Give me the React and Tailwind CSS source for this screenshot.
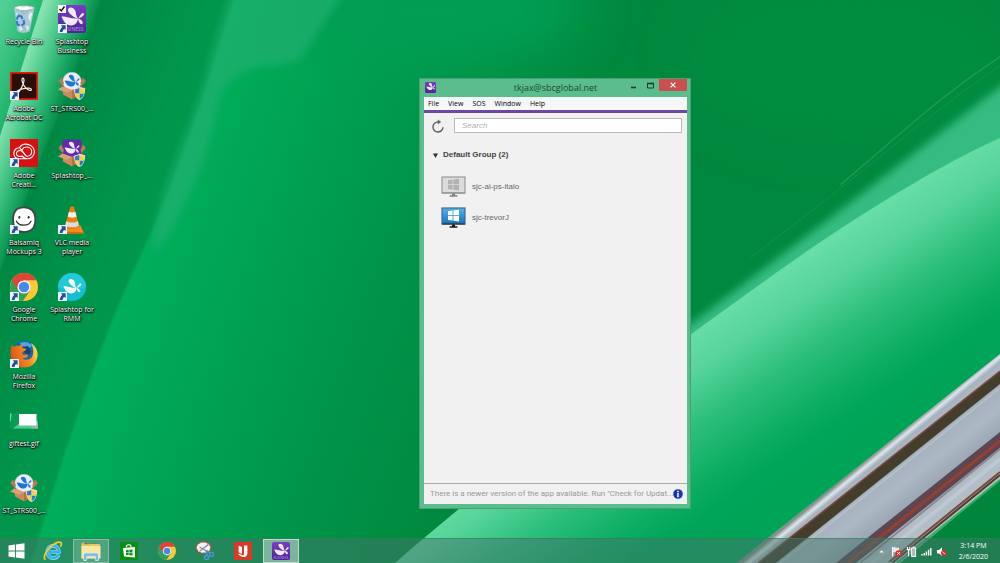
import React, { useState } from 'react';

const segoe = "font-['Open_Sans','Noto_Sans',sans-serif]";
const arial = "font-['Liberation_Sans',Arial,sans-serif]";

function Wallpaper() {
    return (
        <svg className="absolute inset-0 w-full h-full" viewBox="0 0 1000 563" preserveAspectRatio="none" aria-hidden="true">
            <defs>
                <linearGradient id="base" gradientUnits="userSpaceOnUse" x1="120" y1="300" x2="480" y2="430">
                    <stop offset="0" stopColor="#00af5b" />
                    <stop offset="0.2" stopColor="#00a654" />
                    <stop offset="0.6" stopColor="#009549" />
                    <stop offset="1" stopColor="#00883e" />
                </linearGradient>
                <linearGradient id="leftShade" gradientUnits="userSpaceOnUse" x1="40" y1="160" x2="200" y2="220">
                    <stop offset="0" stopColor="#008743" />
                    <stop offset="0.5" stopColor="#00954b" />
                    <stop offset="1" stopColor="#009a4e" />
                </linearGradient>
                <linearGradient id="roll" gradientUnits="userSpaceOnUse" x1="22" y1="68" x2="72" y2="86">
                    <stop offset="0" stopColor="#86e3b2" />
                    <stop offset="0.3" stopColor="#55cd90" />
                    <stop offset="0.65" stopColor="#22ae6b" />
                    <stop offset="1" stopColor="#008743" />
                </linearGradient>
                <linearGradient id="corner" gradientUnits="userSpaceOnUse" x1="0" y1="20" x2="38" y2="34">
                    <stop offset="0" stopColor="#4fcf92" />
                    <stop offset="1" stopColor="#1fb26b" />
                </linearGradient>
                <linearGradient id="sheen" gradientUnits="userSpaceOnUse" x1="752" y1="292" x2="842" y2="428">
                    <stop offset="0" stopColor="#66dea6" />
                    <stop offset="0.22" stopColor="#56d49a" />
                    <stop offset="0.5" stopColor="#2cbe7b" />
                    <stop offset="0.8" stopColor="#0cad63" />
                    <stop offset="1" stopColor="#00a65a" />
                </linearGradient>
                <linearGradient id="chrome" gradientUnits="userSpaceOnUse" x1="884" y1="446" x2="893" y2="457">
                    <stop offset="0" stopColor="#7f9088" />
                    <stop offset="0.3" stopColor="#dfe6ed" />
                    <stop offset="0.6" stopColor="#a5b1bc" />
                    <stop offset="1" stopColor="#aeb9c4" />
                </linearGradient>
                <linearGradient id="steel" gradientUnits="userSpaceOnUse" x1="895" y1="465" x2="930" y2="510">
                    <stop offset="0" stopColor="#a3b0bb" />
                    <stop offset="0.35" stopColor="#acb8c3" />
                    <stop offset="0.7" stopColor="#9ba7b3" />
                    <stop offset="1" stopColor="#b3bdc6" />
                </linearGradient>
                <filter id="soft" x="-20%" y="-20%" width="140%" height="140%"><feGaussianBlur stdDeviation="9" /></filter>
                <filter id="softer" x="-30%" y="-30%" width="160%" height="160%"><feGaussianBlur stdDeviation="24" /></filter>
                <filter id="edge"><feGaussianBlur stdDeviation="1.2" /></filter>
                <filter id="haze" x="-20%" y="-20%" width="140%" height="140%"><feGaussianBlur stdDeviation="4.5" /></filter>
            </defs>
            <rect width="1000" height="563" fill="url(#base)" />
            <ellipse cx="850" cy="60" rx="160" ry="80" fill="#008d40" filter="url(#softer)" />
            <ellipse cx="430" cy="10" rx="150" ry="50" fill="#009f53" filter="url(#softer)" />
            {/* darker side of the long ridge */}
            <path d="M-20 -20H240C215 60 180 170 150 235C115 310 100 350 83 400C62 460 50 500 26 580H-20Z" fill="url(#leftShade)" filter="url(#edge)" />
            <path d="M232 -10H345L300 60C268 70 240 60 220 95C212 150 185 215 154 256C150 200 195 130 210 60Z" fill="#24b072" opacity="0.7" filter="url(#haze)" />
            {/* top left roll */}
            <path d="M43 -6H106C85 60 60 110 38 165C22 205 12 245 -6 285V135Z" fill="url(#roll)" filter="url(#edge)" />
            <path d="M0 0H43L0 136Z" fill="url(#corner)" />
            {/* right hand bands */}
            <path d="M1020 72C930 140 850 205 680 332V350L1020 150Z" fill="#35bc82" filter="url(#haze)" />
            <path d="M1010 50C940 95 900 135 840 185" stroke="#2c9c58" strokeWidth="1.5" fill="none" opacity="0.8" />
            <path d="M1000 66C930 112 870 168 750 258" stroke="#25924f" strokeWidth="1" fill="none" opacity="0.6" />
            <path d="M1000 138C940 165 870 208 800 256C720 312 640 372 560 430C500 474 440 524 395 563H1000Z" fill="url(#sheen)" />
            <path d="M1000 300L860 400L740 480L640 563H1000Z" fill="#00a357" opacity="0.5" filter="url(#soft)" />
            {/* metal trim */}
            <path d="M1000 480L895 563H1000Z" fill="#00863c" />
            <path d="M1000 354L768 538L737 563H900L1000 480Z" fill="url(#steel)" />
            <path d="M1000 354L768 538L737 563H760L1000 372Z" fill="url(#chrome)" />
            <path d="M1000 371L758 563H776L1000 384Z" fill="#443d2c" />
            <path d="M1000 371L758 563" stroke="#7b4941" strokeWidth="1.5" />
            <path d="M1000 388L777 566" stroke="#bac5ce" strokeWidth="2" opacity="0.7" />
            <path d="M1000 432L836 563H856L1000 448Z" fill="#5d4552" />
            <path d="M1000 441L848 563" stroke="#94402e" strokeWidth="3" />
            <path d="M1000 449L860 563" stroke="#8a8a93" strokeWidth="2" />
            <path d="M1000 459L872 563" stroke="#bcc8d2" strokeWidth="4" />
            <path d="M1000 472L889 562" stroke="#7d4636" strokeWidth="2" />
            <path d="M1000 475L892 563" stroke="#4a3c2c" strokeWidth="2" />
            <path d="M1000 480L897 563" stroke="#2cb263" strokeWidth="2" />
        </svg>
    );
}

/* Splashtop drops, drawn on a 28 unit square */
function Splash({ fill = "#fff" }) {
    return (
        <g fill={fill}>
            <path d="M10.4 3.4C12.6 1.6 16.4 3 17.4 6C18.2 8.6 17.8 10.6 20 13.6C17.6 13.4 14.4 11.4 12 8.8C10.4 7 9.2 4.6 10.4 3.4Z" />
            <path d="M3.4 11.6C7.4 11 11.6 13.6 20 13.6C19.8 16 18.8 18.2 16.6 19.6C13.6 21.4 9.4 20.4 7 17.8C5 15.6 4.6 13.4 3.4 11.6Z" />
            <path d="M25.4 8C27 9.4 25 12 20 13.6C22 11.6 23.2 7.2 25.4 8Z" />
            <path d="M20 13.6C23 14.4 25.6 16.6 24.4 18.8C22 20.2 20.6 17 20 13.6Z" />
        </g>
    );
}

function SplashtopIcon({ className, label = true }) {
    return (
        <svg className={className} viewBox="0 0 28 28" aria-hidden="true">
            <defs>
                <linearGradient id="purple" x1="0" y1="0" x2="0" y2="1">
                    <stop offset="0" stopColor="#7d3bc6" />
                    <stop offset="1" stopColor="#4c2596" />
                </linearGradient>
            </defs>
            <rect width="28" height="28" rx="3" fill="url(#purple)" />
            <Splash fill="#f0eaf8" />
            {label && <text x="14" y="26" textAnchor="middle" fontSize="5" fontFamily="Open Sans" fill="#b79fdc">BUSINESS</text>}
        </svg>
    );
}

function BinIcon() {
    return (
        <svg className="w-7 h-7" viewBox="0 0 28 28" aria-hidden="true">
            <path d="M4 3L7.5 26C10 28.4 17 28.4 19.8 26L24.4 3Z" fill="#b4cbd9" opacity="0.92" />
            <path d="M4 3C4 0 24.4 0 24.4 3C23 6 6 6 4 3Z" fill="#e8eff3" stroke="#8fa6b4" strokeWidth="0.8" />
            <path d="M7 2.5L10 1L13 4L17 1L20 3.5L17 5H10Z" fill="#fbfdfd" />
            <path d="M6 7L9 10L8 16ZM20 7L22.5 8L20 17L18 12ZM9 20L13 24L10 26ZM16 20L19 22L17 26Z" fill="#e3edf2" />
            <path d="M11 6L14 9L17 6M12 22L16 25" stroke="#8ea5b4" strokeWidth="0.8" fill="none" />
            <path d="M6.6 14.5L8.6 10.5L11.6 11.5L12.4 14M13.6 15L14.2 18.6L11.6 20.6M9.8 20.5L7.4 19.5L6.8 16" stroke="#3276cf" strokeWidth="2" fill="none" />
        </svg>
    );
}

function AcrobatIcon() {
    return (
        <svg className="w-7 h-7" viewBox="0 0 28 28" aria-hidden="true">
            <rect x="0.8" y="0.8" width="26.4" height="26.4" fill="#2b0f0a" stroke="#ef1c0d" strokeWidth="1.8" />
            <path d="M12.8 6.2C14.8 6.4 14 10.5 12.4 13.8C10.8 17.4 8.4 21.4 6.8 21.2C5 20 9 17.3 13.4 16.6C17.8 15.8 21.4 16 21.5 17.7C21 19.7 16.8 17.5 14.5 14.3C12.4 11.4 11 6.6 12.8 6.2Z" fill="none" stroke="#f5ebe8" strokeWidth="1.2" />
        </svg>
    );
}

function CreativeCloudIcon() {
    return (
        <svg className="w-7 h-7" viewBox="0 0 28 28" aria-hidden="true">
            <rect width="28" height="28" fill="#d90f12" />
            <g fill="none" stroke="#fff" strokeWidth="1.1">
                <path d="M16.5 19.8H9.5C5.6 19.8 3.6 17 3.8 14C4 11 6.4 8.7 9.3 8.8C11.2 5.8 14.5 4.6 17.8 5.4C22 6.3 24.7 9.7 24.3 13.8C23.8 17.5 20.7 20 17 19.8C14.8 19.7 13.6 18.7 12 17" />
                <path d="M15.7 16.6C14.4 15.3 13.4 12.5 11 11.7C8.8 11 6.6 12.5 6.5 14.5C6.4 16.3 7.8 17.4 9.6 17.4H12.6" />
                <path d="M12 10.7C13.2 8.7 15.2 7.7 17.5 8C20.2 8.5 21.9 10.9 21.6 13.4C21.2 16 19 17.5 16.8 17.2C14.6 16.7 13.5 12 9.8 9.2" />
            </g>
        </svg>
    );
}

function BalsamiqIcon() {
    return (
        <svg className="w-7 h-7" viewBox="0 0 28 28" aria-hidden="true">
            <path d="M7 3C11 0.6 18 0.6 22 4C26 8 26.4 16 23.6 21.4C20 26.6 12 27 7 24.4C2.4 20.5 1.2 8 7 3Z" fill="#fff" stroke="#444" strokeWidth="1.8" />
            <ellipse cx="9.3" cy="11.3" rx="1" ry="1.4" fill="#333" />
            <ellipse cx="18.6" cy="11.3" rx="1" ry="1.4" fill="#333" />
            <path d="M6.4 15.3C9.5 20.5 18.5 20.5 21 15.3" fill="none" stroke="#333" strokeWidth="1.3" strokeLinecap="round" />
        </svg>
    );
}

function ChromeIcon({ className }) {
    return (
        <svg className={className} viewBox="0 0 28 28" aria-hidden="true">
            <circle cx="14" cy="14" r="14" fill="#fcc934" />
            <path d="M14 14L1.9 7A14 14 0 0 0 13 28L20 17.5Z" fill="#33a058" />
            <path d="M1.9 7A14 14 0 0 1 26.2 7.2H14L8 17.4Z" fill="#de4437" />
            <circle cx="14" cy="14" r="6.6" fill="#f5f5f5" />
            <circle cx="14" cy="14" r="5.2" fill="#4688f1" />
        </svg>
    );
}

function FirefoxIcon() {
    return (
        <svg className="w-7 h-7" viewBox="0 0 28 28" aria-hidden="true">
            <defs>
                <linearGradient id="fox" x1="0" y1="0.6" x2="1" y2="0.3">
                    <stop offset="0" stopColor="#e2501a" />
                    <stop offset="0.6" stopColor="#f08b1e" />
                    <stop offset="1" stopColor="#fde24a" />
                </linearGradient>
            </defs>
            <circle cx="14.5" cy="13" r="12.4" fill="#1b67ac" />
            <path d="M10 3C14 1 20 2 22 6L18 9L13 7Z" fill="#4aa8dc" />
            <path d="M12 7L18 6L21 11L19 16L14 12Z" fill="#12437f" />
            <path d="M2 4.5C2.5 6 3 6.6 4 6.7C6 5.4 8 5.5 9.5 6C10.6 4.4 11.6 3.8 12.8 3.6C11.8 5.5 12 6.8 12.8 8C14 8.6 15.5 8.3 16.3 9C16 11 13.6 11 12.4 12.5C12.2 14 12.6 14.6 13.8 14.8C15.6 14.9 17 13.8 18.4 14.8C17.4 18 14.6 18.6 12 18C14 20.5 19.5 20.5 22 17C24 13.6 23.6 8 20.8 3C25 5.4 27.8 10 27.6 15.5C27 22.7 21.4 27.6 14 27.6C6.5 27.6 0.7 22 0.6 14.5C0.6 10.5 1 7.2 2 4.5Z" fill="url(#fox)" />
        </svg>
    );
}

function VlcIcon() {
    return (
        <svg className="w-7 h-7" viewBox="0 0 28 28" aria-hidden="true">
            <path d="M3.2 19.5H22.5L26 27.6H2Z" fill="#f58a1c" />
            <path d="M2 26H26V27.6H2Z" fill="#d96a05" />
            <path d="M12.3 1C13 0 15.2 0 16 1L21.4 21C18.5 24 9.6 24 6.6 21Z" fill="#f07c12" />
            <path d="M11 5.8C12.5 6.8 15.8 6.8 17.3 5.8L18.6 10.5C16.5 12 11.8 12 9.7 10.5Z" fill="#f1f1f1" />
            <path d="M8.4 15C11 17 17.3 17 19.8 15L21 19.4C18.3 22 9.8 22 7.2 19.4Z" fill="#dcdcdc" />
        </svg>
    );
}

function RmmIcon() {
    return (
        <svg className="w-7 h-7" viewBox="0 0 28 28" aria-hidden="true">
            <circle cx="14" cy="14" r="14" fill="#15bdd6" />
            <path d="M0 14A14 14 0 0 1 28 14C20 18 8 18 0 14Z" fill="#2bd3df" opacity="0.55" />
            <g transform="translate(2.6 4) scale(0.8)"><Splash /></g>
        </svg>
    );
}

/* Cardboard installer box with the UAC shield */
function BoxIcon({ purple }) {
    return (
        <svg className="w-7 h-7" viewBox="0 0 28 28" aria-hidden="true">
            <path d="M3 6L9 10H19L25 6L23 23L14 27L5 22Z" fill="#8a5431" />
            {purple
                ? <rect x="4.5" y="0.5" width="19" height="17" rx="3" fill="#6429b0" />
                : <circle cx="14" cy="9.5" r="9.3" fill="#e9edf2" stroke="#c3ccd4" strokeWidth="0.6" />}
            <g transform="translate(4.4 1) scale(0.66)"><Splash fill={purple ? "#f0eaf8" : "#1876dd"} /></g>
            <path d="M4.5 14.6L14 18V27.4L5 22.5Z" fill="#c98a5d" />
            <path d="M14 18L23.5 14.6L23 22.5L14 27.4Z" fill="#b1734a" />
            <path d="M4.5 14.6L0 17.4L9 20.8L14 18Z" fill="#dba176" />
            <path d="M23.5 14.6L28 16.8L20 20.6L14 18Z" fill="#c98a5d" />
            <path d="M3 5.5L0.4 9L4.6 14L6 11ZM25 5.5L28 9L23.6 14L22.4 11Z" fill="#b97b50" />
            <path d="M21.5 14.5C23.5 16 25.5 16.4 27 16.5C27.2 22 25.5 26 21.5 28C17.5 26 16 22 16.2 16.5C18 16.4 20 16 21.5 14.5Z" fill="#e8eaec" />
            <path d="M21.5 15.8V21.4H17.2C17 20 17 18.5 17.1 17.3C18.8 17.2 20.3 16.7 21.5 15.8ZM21.5 21.4H26C25.4 24 24 25.9 21.5 27.1Z" fill="#2a7bc8" />
            <path d="M21.5 15.8C22.9 16.8 24.4 17.2 26.1 17.3C26.2 18.6 26.2 20 26 21.4H21.5ZM17.2 21.4H21.5V27.1C19 25.9 17.7 24 17.2 21.4Z" fill="#f8cf3c" />
        </svg>
    );
}

function GifIcon() {
    return (
        <svg className="w-7 h-7" viewBox="0 0 28 28" aria-hidden="true">
            <rect y="6.5" width="28" height="15" fill="#089c52" />
            <path d="M0 6.5H1.5L0.8 14H0Z" fill="#6fd8a0" />
            <path d="M3 21.5L12 14H28V21.5Z" fill="#51cb92" />
            <path d="M20 21.5L28 16V21.5Z" fill="#9fb2ab" />
            <rect x="9" y="7" width="17.5" height="11.5" fill="#fff" />
        </svg>
    );
}

function ShortcutArrow() {
    return (
        <svg className="absolute left-0 bottom-0 w-[9px] h-[9px]" viewBox="0 0 8 8" aria-hidden="true">
            <rect width="8" height="8" fill="#eef3f8" />
            <path d="M2.6 1.2H6.8V5.4L5.6 4.4C4.6 5 4.2 5.8 4 7.2H1.6C1.6 5 2.4 3.8 3.8 2.6Z" fill="#1f4f99" />
        </svg>
    );
}

const columns = [
    [
        { name: "Recycle Bin", icon: <BinIcon /> },
        { name: "Adobe Acrobat DC", icon: <AcrobatIcon />, shortcut: true },
        { name: "Adobe Creati...", icon: <CreativeCloudIcon />, shortcut: true },
        { name: "Balsamiq Mockups 3", icon: <BalsamiqIcon />, shortcut: true },
        { name: "Google Chrome", icon: <ChromeIcon className="w-7 h-7" />, shortcut: true },
        { name: "Mozilla Firefox", icon: <FirefoxIcon />, shortcut: true },
        { name: "giftest.gif", icon: <GifIcon /> },
        { name: "ST_STRS00_...", icon: <BoxIcon /> },
    ],
    [
        { name: "Splashtop Business", icon: <SplashtopIcon className="w-7 h-7" />, shortcut: true, checked: true },
        { name: "ST_STRS00_...", icon: <BoxIcon /> },
        { name: "Splashtop_...", icon: <BoxIcon purple /> },
        { name: "VLC media player", icon: <VlcIcon />, shortcut: true },
        { name: "Splashtop for RMM", icon: <RmmIcon />, shortcut: true },
    ],
];

function DesktopIcon({ item }) {
    return (
        <button className="flex flex-col items-center gap-1 h-[67px] w-full px-px">
            <span className="relative block">
                {item.icon}
                {item.shortcut && <ShortcutArrow />}
                {item.checked && (
                    <svg className="absolute left-0 top-0 w-2 h-2" viewBox="0 0 8 8" aria-hidden="true">
                        <rect width="8" height="8" fill="#fff" />
                        <path d="M1.5 4L3.3 6L6.5 1.5" fill="none" stroke="#111" strokeWidth="1.4" />
                    </svg>
                )}
            </span>
            <span className="text-[7px] leading-[9px] text-white text-center [text-shadow:0_1px_1px_#000,1px_1px_2px_#000,0_0_2px_#000]">{item.name}</span>
        </button>
    );
}

function Monitor({ online }) {
    return (
        <svg className="w-[25px] h-[21px] shrink-0" viewBox="0 0 25 21" aria-hidden="true">
            <defs>
                <linearGradient id="screen" x1="0" y1="0" x2="0" y2="1">
                    <stop offset="0" stopColor="#4fb4ee" />
                    <stop offset="1" stopColor="#1373c4" />
                </linearGradient>
            </defs>
            <rect x="1" y="1" width="23" height="16" fill={online ? "url(#screen)" : "#dcdcdc"} stroke={online ? "#4b6a80" : "#9a9a9a"} strokeWidth="1.2" />
            <path d="M1 17H24" stroke={online ? "#222" : "#888"} strokeWidth="1" />
            <path d="M11 17.4H14V19.2H16.4V20.8H8.6V19.2H11Z" fill={online ? "#1c1c1c" : "#808080"} />
            <path d="M7 4.2L11.6 3.6V8.2H7ZM12.4 3.5L18 2.8V8.2H12.4ZM7 9H11.6V13.6L7 13ZM12.4 9H18V14.4L12.4 13.7Z" fill={online ? "#fff" : "#b2b2b2"} />
        </svg>
    );
}

function SplashtopWindow() {
    const [open, setOpen] = useState(true);
    const [query, setQuery] = useState("");
    const computers = [
        { name: "sjc-ai-ps-italo", online: false },
        { name: "sjc-trevorJ", online: true },
    ].filter((c) => c.name.includes(query));

    return (
        <section className="absolute left-[419px] top-[78px] w-[272px] h-[431px] flex flex-col bg-[#5abd8b] border border-[#4a9f74] pl-1 pr-[3px] pb-1">
            {/* Title bar */}
            <header className="flex items-start h-[18px] shrink-0">
                <div className="w-[62px] pl-px pt-[3px]"><SplashtopIcon className="w-[11px] h-[11px]" label={false} /></div>
                <h1 className="flex-1 text-center text-[9px] leading-[18px] text-[#1d4a33]">tkjax@sbcglobal.net</h1>
                <div className="flex w-[62px] justify-end text-[#1d3b2b]">
                    <button aria-label="Minimize" className="w-4 h-3 flex justify-center items-center">
                        <svg className="w-[7px] h-[7px]" viewBox="0 0 7 7"><path d="M1 5.5H6" stroke="currentColor" strokeWidth="1.6" /></svg>
                    </button>
                    <button aria-label="Maximize" className="w-[18px] h-3 flex justify-center items-center">
                        <svg className="w-[7px] h-[7px]" viewBox="0 0 7 7"><path d="M0.5 1.5H6.5V6H0.5Z" fill="none" stroke="currentColor" /><path d="M0 1.5H7" stroke="currentColor" strokeWidth="1.6" /></svg>
                    </button>
                    <button aria-label="Close" className="w-7 h-3 flex justify-center items-center bg-[#c9504f] text-white">
                        <svg className="w-[6px] h-[6px]" viewBox="0 0 6 6"><path d="M0.6 0.6L5.4 5.4M5.4 0.6L0.6 5.4" stroke="currentColor" strokeWidth="1.2" /></svg>
                    </button>
                </div>
            </header>

            <nav className="flex items-center gap-[9px] h-[13px] px-1 bg-[#f6f7f8] text-[7px] leading-[13px] text-black shrink-0">
                <button>File</button>
                <button>View</button>
                <button>SOS</button>
                <button>Window</button>
                <button>Help</button>
            </nav>

            <div className={`flex-1 flex flex-col min-h-0 bg-[#f1f1f1] border-t-3 border-[#6c489f] text-[8px] ${arial}`}>
                <div className="flex items-center gap-[10px] pl-2 pr-[5px] pt-[5px]">
                    <button aria-label="Refresh" className="text-[#666]">
                        <svg className="w-3 h-[14px]" viewBox="0 0 12 14">
                            <path d="M11 8.2A5 5 0 1 1 6.2 3" fill="none" stroke="currentColor" strokeWidth="1.5" />
                            <path d="M5.8 0.4L9.2 3L5.8 5.6Z" fill="currentColor" />
                        </svg>
                    </button>
                    <input aria-label="Search" placeholder="Search" value={query} onChange={(e) => setQuery(e.target.value)} className="flex-1 min-w-0 h-[15px] px-[7px] bg-white border border-[#b9b9b9] text-[#555] italic placeholder:text-[#b0b0b0] outline-none" />
                </div>

                <button onClick={() => setOpen(!open)} className="flex items-center gap-[5px] pl-[9px] mt-4 h-3 font-bold text-[#444]">
                    <svg className={`w-[5px] h-[5px] ${open ? "" : "-rotate-90"}`} viewBox="0 0 5 5"><path d="M0 0.4H5L2.5 5Z" fill="#333" /></svg>
                    Default Group (2)
                </button>

                {open && (
                    <ul className="flex flex-col gap-[10px] mt-[15px] pl-[17px] text-[#666]">
                        {computers.map((c) => (
                            <li key={c.name} className="flex items-center gap-[6px]">
                                <Monitor online={c.online} />
                                {c.name}
                            </li>
                        ))}
                    </ul>
                )}

                <footer className="mt-auto flex items-center justify-between h-[21px] pl-[6px] pr-[5px] border-t border-[#aaa] text-[#999] whitespace-nowrap font-[Roboto,sans-serif]">
                    <span>There is a newer version of the app available. Run "Check for Updat...</span>
                    <svg className="w-[10px] h-[10px] shrink-0" viewBox="0 0 10 10" aria-hidden="true">
                        <circle cx="5" cy="5" r="4.8" fill="#1a35b5" />
                        <path d="M5 1.8V3.2M5 4V8.2" stroke="#fff" strokeWidth="1.5" />
                    </svg>
                </footer>
            </div>
        </section>
    );
}

const apps = [
    {
        name: "Internet Explorer",
        icon: (
            <svg className="w-5 h-5" viewBox="0 0 20 20" aria-hidden="true">
                <path d="M15.6 13.6C14.6 15.8 12.6 17 10.2 17C6.8 17 4.4 14.6 4.4 11C4.4 7.4 6.8 5 10.2 5C13.8 5 16 7.4 15.8 11.2H7.4" fill="none" stroke="#8adcf9" strokeWidth="3.8" />
                <path d="M15.6 13.6C14.6 15.8 12.6 17 10.2 17C6.8 17 4.4 14.6 4.4 11C4.4 7.4 6.8 5 10.2 5C13.8 5 16 7.4 15.8 11.2H7.4" fill="none" stroke="#36b0ea" strokeWidth="2.4" />
                <path d="M2.4 18.8C-0.6 16.4 3.6 7.6 10.8 3.2C15 0.7 18.6 0.4 18.4 3C18.3 4 18 4.8 17.4 5.8" fill="none" stroke="#f7c92e" strokeWidth="1.7" />
            </svg>
        ),
    },
    {
        name: "File Explorer",
        active: "bg-white/20 border-white/30",
        icon: (
            <svg className="w-5 h-5" viewBox="0 0 20 20" aria-hidden="true">
                <path d="M0.5 3L2 1.6H7L8 3H19V17H0.5Z" fill="#e9c767" />
                <path d="M3 2.6H8M11 2.4H17" stroke="#4e9b58" strokeWidth="1.4" />
                <path d="M4 1.6H6" stroke="#d2473a" strokeWidth="1.4" />
                <path d="M0.5 5H19.5V17.6H0.5Z" fill="#fbe9a2" />
                <path d="M2.5 19.5V14C2.5 12.6 3.4 12 4.6 12H15.4C16.6 12 17.5 12.6 17.5 14V19.5H14.4V15.4H5.6V19.5Z" fill="#7fbbe6" stroke="#d9eefa" strokeWidth="0.7" />
            </svg>
        ),
    },
    {
        name: "Store",
        icon: (
            <svg className="w-[18px] h-[18px]" viewBox="0 0 18 18" aria-hidden="true">
                <rect width="18" height="18" fill="#0a8f13" />
                <path d="M3 6L15 5V15.4L4 14.6Z" fill="#fff" />
                <path d="M6.4 5.6V4.4C6.4 2.4 11 2 11 4.2V5.4" fill="none" stroke="#fff" strokeWidth="1.1" />
                <path d="M6 8.1L8.7 7.8V10.2H6ZM9.3 7.7L12.5 7.4V10.2H9.3ZM6 10.8H8.7V13.1L6 12.9ZM9.3 10.8H12.5V13.5L9.3 13.2Z" fill="#0a8f13" />
            </svg>
        ),
    },
    { name: "Chrome", icon: <ChromeIcon className="w-[18px] h-[18px]" /> },
    {
        name: "Snipping Tool",
        icon: (
            <svg className="w-5 h-5" viewBox="0 0 20 20" aria-hidden="true">
                <ellipse cx="8.5" cy="6.6" rx="7.2" ry="5.6" fill="#f3f3f3" stroke="#d0493f" strokeWidth="1.2" strokeDasharray="3 1" />
                <path d="M5 10L13.5 3.4M4.5 6L13.4 11" stroke="#8b949c" strokeWidth="1.4" />
                <circle cx="11.6" cy="16.6" r="2" fill="none" stroke="#4d97dc" strokeWidth="1.3" />
                <circle cx="16.6" cy="13.4" r="2" fill="none" stroke="#4d97dc" strokeWidth="1.3" />
                <path d="M10.8 9.4L12 14.4M11.6 9.6L15 12" stroke="#4d97dc" strokeWidth="1.4" />
            </svg>
        ),
    },
    {
        name: "Bookmarks",
        icon: (
            <svg className="w-[18px] h-[18px]" viewBox="0 0 18 18" aria-hidden="true">
                <rect width="18" height="18" fill="#d93a26" />
                <path d="M4.6 3.4L8 5V12L4.6 10.2ZM10 3.4H13.4V12C13 14.4 10.6 15.4 8.4 15L4.6 12.8V11.4L9 13.4L10 12.6Z" fill="#fff" />
            </svg>
        ),
    },
    { name: "Splashtop", active: "bg-white/40 border-white/50", icon: <SplashtopIcon className="w-[18px] h-[18px]" /> },
];

function Taskbar() {
    return (
        <footer className="relative flex items-stretch justify-between h-[25px] shrink-0 bg-[#46746a]/50 border-t border-[#2f7f5a]/60">
            <nav className="flex items-stretch gap-0.5">
                <button aria-label="Start" className="w-[33px] flex items-center justify-center">
                    <svg className="w-[17px] h-4" viewBox="0 0 17 16" aria-hidden="true">
                        <path d="M0.5 2.6L7 1.6V7.6H0.5ZM7.9 1.5L16.5 0.2V7.6H7.9ZM0.5 8.4H7V14.4L0.5 13.4ZM7.9 8.4H16.5V15.8L7.9 14.5Z" fill="#fff" />
                    </svg>
                </button>
                {apps.map((app) => (
                    <button key={app.name} aria-label={app.name} className={`w-9 flex items-center justify-center border ${app.active ?? "border-transparent"}`}>
                        {app.icon}
                    </button>
                ))}
            </nav>

            <div className="flex items-center gap-1 pr-3">
                <svg className="w-[11px] h-[11px]" viewBox="0 0 11 11" aria-hidden="true"><path d="M3.4 6.6L5.5 4.2L7.6 6.6Z" fill="#fff" /></svg>
                <svg className="w-[11px] h-[11px]" viewBox="0 0 11 11" aria-hidden="true">
                    <path d="M1.6 1V10.4" stroke="#fff" strokeWidth="1.2" />
                    <path d="M2.2 1.4C4 0.6 5 2.2 8 1.4V6.4C5 7 4 5.6 2.2 6.4Z" fill="#e8eeec" />
                    <circle cx="7.6" cy="7.4" r="3.2" fill="#dc2f2a" />
                    <path d="M6.3 6.1L8.9 8.7M8.9 6.1L6.3 8.7" stroke="#fff" />
                </svg>
                <svg className="w-[11px] h-[11px]" viewBox="0 0 11 11" aria-hidden="true">
                    <path d="M2.6 3.6V10.4M1.4 1V3M3.8 1V3M0.8 3.6H4.4" stroke="#fff" strokeWidth="1.1" />
                    <rect x="5.6" y="2" width="4" height="8.4" fill="#a9bbb3" stroke="#fff" strokeWidth="1" />
                    <path d="M6.6 1H8.6" stroke="#fff" />
                </svg>
                <svg className="w-[11px] h-[11px]" viewBox="0 0 11 11" aria-hidden="true">
                    <path d="M1 8V9.4M3.2 7V9.4M5.4 5.4V9.4M7.6 3.8V9.4M9.8 2V9.4" stroke="#fff" strokeWidth="1.4" />
                </svg>
                <svg className="w-[11px] h-[11px]" viewBox="0 0 11 11" aria-hidden="true">
                    <path d="M1 4H3L6 1.2V9.8L3 7.4H1Z" fill="#fff" />
                    <circle cx="7.8" cy="7" r="2.8" fill="#dc2f2a" />
                    <path d="M6.4 5.8L9.2 8.2" stroke="#fff" strokeWidth="0.8" />
                </svg>
                <time dateTime="2020-02-06T15:14" className="flex flex-col items-center ml-2 text-[7px] leading-[11px] text-white">
                    <span>3:14 PM</span>
                    <span>2/6/2020</span>
                </time>
            </div>
        </footer>
    );
}

export default function App() {
    return (
        <div className={`relative h-screen flex flex-col overflow-hidden bg-[#009549] ${segoe}`}>
            <Wallpaper />
            <main className="relative flex-1 min-h-0">
                <div className="flex items-start pt-[5px]">
                    {columns.map((items, i) => (
                        <div key={i} className="flex flex-col w-12">
                            {items.map((item, j) => <DesktopIcon key={j} item={item} />)}
                        </div>
                    ))}
                </div>
                <SplashtopWindow />
            </main>
            <Taskbar />
        </div>
    );
}
